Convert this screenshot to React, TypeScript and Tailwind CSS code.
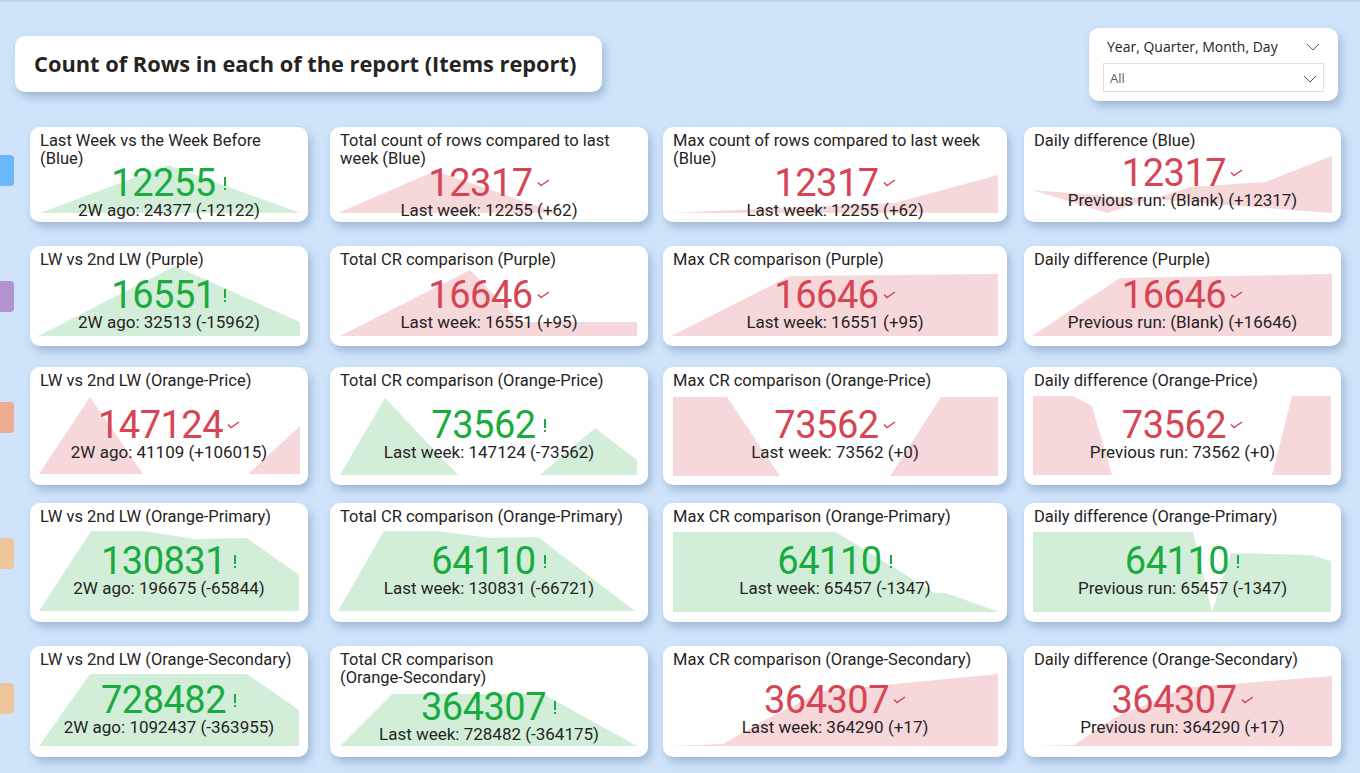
import React from "react";

type Kpi = {
  title: string[];
  value: string;
  good: boolean;
  sub: string;
  pts: string;
};

type Row = {
  h: number;
  hClass: string;
  mtClass: string;
  tabClass: string;
  cards: Kpi[];
};

const widths = [278, 318, 344, 317];
const widthClass = ["w-[278px]", "w-[318px]", "w-[344px]", "w-[317px]"];
const gapClass = ["ml-[16px]", "ml-[22px]", "ml-[15px]", "ml-[17px]"];

const rows: Row[] = [
  {
    h: 95,
    hClass: "h-[95px]",
    mtClass: "mt-0",
    tabClass: "mt-[28px] bg-[#6cb6fa]",
    cards: [
      {
        title: ["Last Week vs the Week Before", "(Blue)"],
        value: "12255",
        good: true,
        sub: "2W ago: 24377 (-12122)",
        pts: "10,86 138,38 270,86",
      },
      {
        title: ["Total count of rows compared to last", "week (Blue)"],
        value: "12317",
        good: false,
        sub: "Last week: 12255 (+62)",
        pts: "8,86 105,44 228,86",
      },
      {
        title: ["Max count of rows compared to last week", "(Blue)"],
        value: "12317",
        good: false,
        sub: "Last week: 12255 (+62)",
        pts: "8,86 232,76 335,48 335,86",
      },
      {
        title: ["Daily difference (Blue)"],
        value: "12317",
        good: false,
        sub: "Previous run: (Blank) (+12317)",
        pts: "8,63 83,86 166,60 241,55 308,29 308,86",
      },
    ],
  },
  {
    h: 100,
    hClass: "h-[100px]",
    mtClass: "mt-[24px]",
    tabClass: "mt-[35px] bg-[#b393cf]",
    cards: [
      {
        title: ["LW vs 2nd LW (Purple)"],
        value: "16551",
        good: true,
        sub: "2W ago: 32513 (-15962)",
        pts: "8,90 145,20 270,76 270,90",
      },
      {
        title: ["Total CR comparison (Purple)"],
        value: "16646",
        good: false,
        sub: "Last week: 16551 (+95)",
        pts: "10,90 140,24 190,76 307,76 307,90",
      },
      {
        title: ["Max CR comparison (Purple)"],
        value: "16646",
        good: false,
        sub: "Last week: 16551 (+95)",
        pts: "8,90 127,30 335,28 335,90",
      },
      {
        title: ["Daily difference (Purple)"],
        value: "16646",
        good: false,
        sub: "Previous run: (Blank) (+16646)",
        pts: "8,90 96,32 308,28 308,90",
      },
    ],
  },
  {
    h: 118,
    hClass: "h-[118px]",
    mtClass: "mt-[21px]",
    tabClass: "mt-[35px] bg-[#eeab93]",
    cards: [
      {
        title: ["LW vs 2nd LW (Orange-Price)"],
        value: "147124",
        good: false,
        sub: "2W ago: 41109 (+106015)",
        pts: "9,107 60,30 113,107 218,107 270,59 270,107",
      },
      {
        title: ["Total CR comparison (Orange-Price)"],
        value: "73562",
        good: true,
        sub: "Last week: 147124 (-73562)",
        pts: "10,108 55,31 128,108 210,108 265,61 307,93 307,108",
      },
      {
        title: ["Max CR comparison (Orange-Price)"],
        value: "73562",
        good: false,
        sub: "Last week: 73562 (+0)",
        pts: "10,30 64,30 117,109 227,109 278,30 335,30 335,109 10,109",
      },
      {
        title: ["Daily difference (Orange-Price)"],
        value: "73562",
        good: false,
        sub: "Previous run: 73562 (+0)",
        pts: "9,29 49,29 68,39 88,108 248,108 268,29 307,29 307,108 9,108",
      },
    ],
  },
  {
    h: 119,
    hClass: "h-[119px]",
    mtClass: "mt-[18px]",
    tabClass: "mt-[35px] bg-[#eec69b]",
    cards: [
      {
        title: ["LW vs 2nd LW (Orange-Primary)"],
        value: "130831",
        good: true,
        sub: "2W ago: 196675 (-65844)",
        pts: "9,108 61,28 113,28 165,36 217,35 269,72 269,108",
      },
      {
        title: ["Total CR comparison (Orange-Primary)"],
        value: "64110",
        good: true,
        sub: "Last week: 130831 (-66721)",
        pts: "8,108 54,28 108,28 160,35 208,34 305,108",
      },
      {
        title: ["Max CR comparison (Orange-Primary)"],
        value: "64110",
        good: true,
        sub: "Last week: 65457 (-1347)",
        pts: "10,29 173,29 272,90 283,90 336,109 10,109",
      },
      {
        title: ["Daily difference (Orange-Primary)"],
        value: "64110",
        good: true,
        sub: "Previous run: 65457 (-1347)",
        pts: "9,29 169,29 188,109 207,50 288,52 307,58 307,109 9,109",
      },
    ],
  },
  {
    h: 111,
    hClass: "h-[111px]",
    mtClass: "mt-[24px]",
    tabClass: "mt-[37px] bg-[#eec69b]",
    cards: [
      {
        title: ["LW vs 2nd LW (Orange-Secondary)"],
        value: "728482",
        good: true,
        sub: "2W ago: 1092437 (-363955)",
        pts: "9,100 60,28 217,28 269,64 269,100",
      },
      {
        title: ["Total CR comparison", "(Orange-Secondary)"],
        value: "364307",
        good: true,
        sub: "Last week: 728482 (-364175)",
        pts: "10,100 62,48 213,48 307,100",
      },
      {
        title: ["Max CR comparison (Orange-Secondary)"],
        value: "364307",
        good: false,
        sub: "Last week: 364290 (+17)",
        pts: "8,100 60,98 100,75 160,45 335,28 335,100",
      },
      {
        title: ["Daily difference (Orange-Secondary)"],
        value: "364307",
        good: false,
        sub: "Previous run: 364290 (+17)",
        pts: "8,100 50,99 90,72 160,42 308,30 308,100",
      },
    ],
  },
];

function Chevron({ className }: { className?: string }) {
  return (
    <svg width="14" height="8" viewBox="0 0 14 8" className={className}>
      <polyline points="1,1 7,7 13,1" fill="none" stroke="#605e5c" strokeWidth="1" />
    </svg>
  );
}

function Indicator({ good }: { good: boolean }) {
  if (good) {
    return (
      <svg width="4" height="14" viewBox="0 0 4 14" className="ml-[7px] mt-[13px] shrink-0">
        <rect x="1" y="0" width="2" height="9" fill="#1aab40" />
        <rect x="1" y="11" width="2" height="2" fill="#1aab40" />
      </svg>
    );
  }
  return (
    <svg width="13" height="8" viewBox="0 0 13 8" className="ml-[4px] mt-[15px] shrink-0">
      <polyline points="1,3.5 4,6.5 12,1" fill="none" stroke="#d64554" strokeWidth="1.5" />
    </svg>
  );
}

function KpiCard({ kpi, w, h, wClass, hClass, mClass }: {
  kpi: Kpi;
  w: number;
  h: number;
  wClass: string;
  hClass: string;
  mClass: string;
}) {
  const twoLines = kpi.title.length > 1;
  return (
    <div
      className={`relative flex flex-col rounded-[10px] bg-white shadow-[3px_5px_8px_rgba(70,100,140,0.35)] ${wClass} ${hClass} ${mClass}`}
    >
      <svg
        viewBox={`0 0 ${w} ${h}`}
        className="absolute inset-0 h-full w-full"
        preserveAspectRatio="none"
      >
        <polygon points={kpi.pts} fill={kpi.good ? "#d2eed9" : "#f6d7da"} />
      </svg>
      <div
        className={`relative px-[10px] pt-[5px] text-[16.5px] leading-[18px] text-[#252423] ${twoLines ? "-mb-[4px]" : "mb-0"}`}
      >
        {kpi.title.map((t) => (
          <div key={t} className="whitespace-nowrap">
            {t}
          </div>
        ))}
      </div>
      <div className="relative flex flex-1 flex-col items-center justify-center pb-[9px]">
        <div className="flex items-start">
          <span
            className={`text-[38px] leading-none tracking-[-0.5px] ${kpi.good ? "text-[#1aab40]" : "text-[#d64554]"}`}
          >
            {kpi.value}
          </span>
          <Indicator good={kpi.good} />
        </div>
        <div className="whitespace-nowrap text-[17px] leading-none text-[#252423]">{kpi.sub}</div>
      </div>
    </div>
  );
}

export default function App() {
  return (
    <div
      className="h-[773px] w-[1360px] overflow-hidden bg-[#cfe4fb]"
      style={{ fontFamily: "Roboto, 'Liberation Sans', sans-serif" }}
    >
      <div className="h-[3px] bg-gradient-to-b from-[#b9cde3] to-[#cfe4fb]" />
      <div className="flex h-[124px] items-start justify-between pl-[15px] pr-[22px] pt-[25px]">
        <div className="mt-[8px] flex h-[56px] w-[587px] items-center rounded-[10px] bg-white pl-[19px] shadow-[3px_5px_8px_rgba(70,100,140,0.35)]">
          <span
            className="text-[21.8px] font-bold text-[#252423]"
            style={{ fontFamily: "'Open Sans', 'Liberation Sans', sans-serif" }}
          >
            Count of Rows in each of the report (Items report)
          </span>
        </div>
        <div
          className="flex h-[73px] w-[249px] flex-col rounded-[10px] bg-white px-[14px] pt-[10px] shadow-[3px_5px_8px_rgba(70,100,140,0.35)]"
          style={{ fontFamily: "'Open Sans', 'Liberation Sans', sans-serif" }}
        >
          <div className="flex items-center justify-between pl-[4px] pr-[4px]">
            <span className="text-[14px] leading-[18px] text-[#252423]">Year, Quarter, Month, Day</span>
            <Chevron />
          </div>
          <div className="mt-[7px] flex h-[29px] items-center justify-between border border-[#e1dfdd] pl-[6px] pr-[6px] pt-[2px]">
            <span className="text-[13px] text-[#605e5c]">All</span>
            <Chevron />
          </div>
        </div>
      </div>
      {rows.map((row, ri) => (
        <div key={ri} className={`flex items-start ${row.mtClass}`}>
          <div className={`h-[31px] w-[14px] shrink-0 rounded-r-[4px] ${row.tabClass}`} />
          {row.cards.map((kpi, ci) => (
            <KpiCard
              key={ci}
              kpi={kpi}
              w={widths[ci]}
              h={row.h}
              wClass={widthClass[ci]}
              hClass={row.hClass}
              mClass={gapClass[ci]}
            />
          ))}
        </div>
      ))}
    </div>
  );
}
